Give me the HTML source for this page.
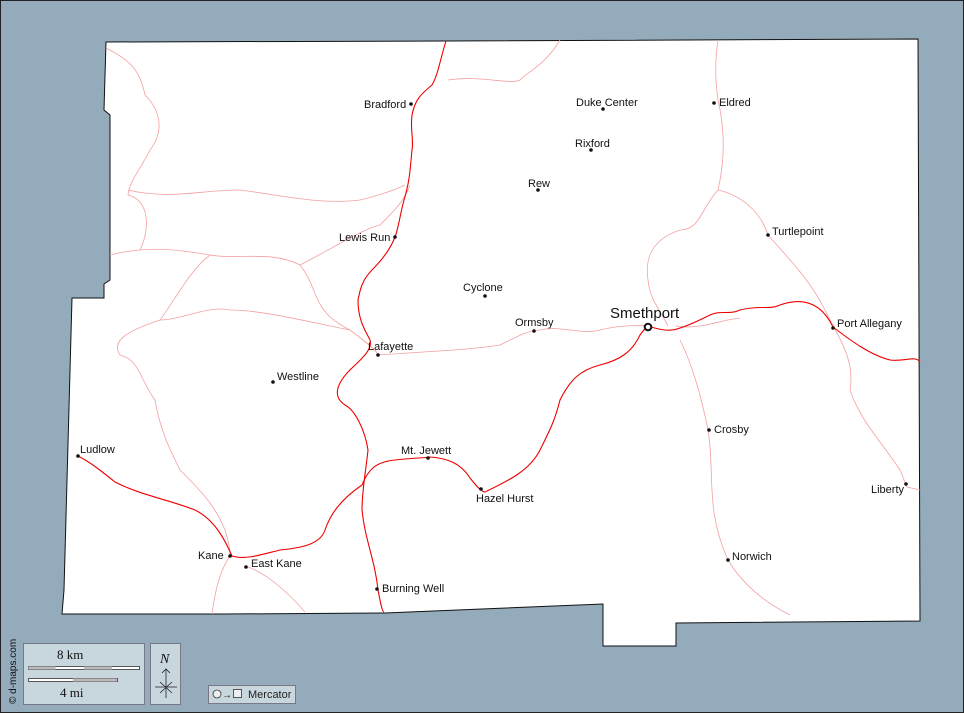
<!DOCTYPE html>
<html><head><meta charset="utf-8"><style>
html,body{margin:0;padding:0;background:#94abbb;}
svg{display:block}
text{font-family:"Liberation Sans",sans-serif;font-size:11px;fill:#111}
</style></head><body>
<svg width="964" height="713" viewBox="0 0 964 713" xmlns="http://www.w3.org/2000/svg">
<rect x="0.5" y="0.5" width="963" height="712" fill="#94abbb" stroke="#222"/>
<path d="M106,42 L446,41 L918,39 L920,621 L676,623 L676,646 L603,646 L603,604 L385,613 L224,614 L62,614 L64,590 L72,298 L104,298 L104,284 L110,280 L110,115 L104,110 L106,42 Z" fill="#fff" stroke="#111" stroke-width="1"/>
<g fill="none" stroke="#f4a0a0" stroke-width="0.8">
<path d="M106,48 C130,60 140,70 145,95 C160,110 165,130 150,150 C140,170 130,180 128,195 C150,200 150,230 140,250"/>
<path d="M110,255 C150,245 180,250 210,255 C240,260 270,250 300,265 C320,290 310,310 350,330 C370,345 378,352 378,355"/>
<path d="M210,255 C190,270 175,300 160,320 C130,330 110,340 120,355 C140,360 140,380 155,400 C160,430 170,450 180,470 C200,490 215,505 225,530 C230,545 230,555 230,556"/>
<path d="M300,265 C330,250 360,230 380,225 C395,210 405,200 410,185"/>
<path d="M128,190 C170,200 200,190 240,190 C280,195 320,205 360,200 C380,195 395,190 405,185"/>
<path d="M350,330 C300,320 260,310 230,310 C210,305 180,320 160,320"/>
<path d="M378,355 C420,352 470,350 500,345 C520,335 530,330 540,330 C560,325 580,335 600,330 C620,325 640,325 648,326"/>
<path d="M448,80 C480,75 510,85 520,80 C530,70 545,65 560,40"/>
<path d="M718,40 C715,60 715,80 718,100 C725,130 725,160 718,190 C700,210 700,230 680,230 C650,240 645,260 648,280 C650,300 660,310 668,326"/>
<path d="M718,190 C740,195 760,210 768,235 C790,260 810,280 825,310 C840,340 855,360 850,390 C860,420 880,440 900,470 C905,480 905,485 907,487 L920,490"/>
<path d="M680,340 C690,360 700,390 708,430 C715,470 705,510 728,560 C740,580 760,600 790,615"/>
<path d="M230,556 C220,570 215,590 212,614"/>
<path d="M246,566 C270,575 290,595 305,612"/>
<path d="M676,326 C700,330 720,320 740,318"/>
</g>
<g fill="none" stroke="#e00" stroke-width="1.1">
<path d="M446,41 C440,60 438,75 432,85 C420,95 415,100 412,115 C410,130 414,140 412,150 C410,170 410,180 404,200 C400,215 398,230 395,237 C390,250 380,262 372,270 C362,280 360,290 358,300 C358,320 365,330 370,340 C373,350 360,360 350,370 C340,380 330,395 345,405 C355,410 365,430 368,450 C366,470 362,490 362,510 C365,540 375,560 378,590 C380,600 382,612 384,612"/>
<path d="M78,456 C90,462 100,470 115,482 C140,495 170,500 195,510 C215,520 225,540 232,556 C245,560 260,555 280,550 C300,548 320,545 325,530 C330,515 340,500 362,485 C368,470 375,462 395,460 C410,458 425,458 430,457 C445,458 460,462 470,478 C478,488 482,492 485,492 C510,480 530,470 540,450 C550,430 555,420 560,400 C570,380 580,370 600,365 C620,360 632,352 640,335 C645,328 648,326 648,326"/>
<path d="M648,326 C660,330 670,332 680,328 C690,325 700,320 710,315 C720,310 730,315 740,310 C760,305 770,310 780,305 C800,298 820,300 833,327 C850,340 870,355 890,360 C905,362 915,355 920,362"/>
</g>
<g fill="#111">
<circle cx="411" cy="104" r="1.8"/><circle cx="603" cy="109" r="1.8"/><circle cx="714" cy="103" r="1.8"/>
<circle cx="591" cy="150" r="1.8"/><circle cx="538" cy="190" r="1.8"/><circle cx="395" cy="237" r="1.8"/>
<circle cx="768" cy="235" r="1.8"/><circle cx="485" cy="296" r="1.8"/><circle cx="534" cy="331" r="1.8"/>
<circle cx="833" cy="328" r="1.8"/><circle cx="378" cy="355" r="1.8"/><circle cx="273" cy="382" r="1.8"/>
<circle cx="709" cy="430" r="1.8"/><circle cx="78" cy="456" r="1.8"/><circle cx="428" cy="458" r="1.8"/>
<circle cx="481" cy="489" r="1.8"/><circle cx="906" cy="484" r="1.8"/><circle cx="230" cy="556" r="1.8"/>
<circle cx="246" cy="567" r="1.8"/><circle cx="728" cy="560" r="1.8"/><circle cx="377" cy="589" r="1.8"/>
</g>
<circle cx="648" cy="327" r="3.3" fill="#fff" stroke="#111" stroke-width="2"/>
<text x="364" y="108">Bradford</text>
<text x="576" y="106">Duke Center</text>
<text x="719" y="106">Eldred</text>
<text x="575" y="147">Rixford</text>
<text x="528" y="187">Rew</text>
<text x="339" y="241">Lewis Run</text>
<text x="772" y="235">Turtlepoint</text>
<text x="463" y="291">Cyclone</text>
<text x="515" y="326">Ormsby</text>
<text x="610" y="318" style="font-size:15px">Smethport</text>
<text x="837" y="327">Port Allegany</text>
<text x="368" y="350">Lafayette</text>
<text x="277" y="380">Westline</text>
<text x="714" y="433">Crosby</text>
<text x="80" y="453">Ludlow</text>
<text x="401" y="454">Mt. Jewett</text>
<text x="476" y="502">Hazel Hurst</text>
<text x="871" y="493">Liberty</text>
<text x="198" y="559">Kane</text>
<text x="251" y="567">East Kane</text>
<text x="732" y="560">Norwich</text>
<text x="382" y="592">Burning Well</text>
<text transform="translate(16,704) rotate(-90)" style="font-size:10px">© d-maps.com</text>
<rect x="23.5" y="643.5" width="121" height="61" fill="#c8d6de" stroke="#778"/>
<text x="57" y="659" style="font-family:'Liberation Serif',serif;font-size:13px">8 km</text>
<rect x="28.5" y="666.5" width="111" height="3" fill="#fff" stroke="#333" stroke-width="0.8"/>
<rect x="28.5" y="666.5" width="27" height="3" fill="#bbb"/><rect x="84" y="666.5" width="28" height="3" fill="#bbb"/>
<rect x="28.5" y="678.5" width="89" height="3" fill="#fff" stroke="#333" stroke-width="0.8"/>
<rect x="73" y="678.5" width="44" height="3" fill="#bbb"/>
<text x="60" y="697" style="font-family:'Liberation Serif',serif;font-size:13px">4 mi</text>
<rect x="150.5" y="643.5" width="30" height="61" fill="#c8d6de" stroke="#778"/>
<text x="160" y="663" style="font-family:'Liberation Serif',serif;font-size:14px;font-style:italic">N</text>
<path d="M166,669 V698 M162,673 L166,669 L170,673 M155,687 H177 M160,682 L172,693 M172,682 L160,693" stroke="#222" fill="none" stroke-width="0.8"/>
<rect x="208.5" y="685.5" width="87" height="18" fill="#c8d6de" stroke="#778"/>
<circle cx="217" cy="694" r="4" fill="#eee" stroke="#333" stroke-width="0.8"/>
<text x="222" y="698" style="font-size:10px">→</text>
<rect x="233.5" y="689.5" width="8" height="8" fill="#eee" stroke="#333" stroke-width="0.8"/>
<text x="248" y="698" style="font-size:11px;fill:#222">Mercator</text>
</svg>
</body></html>
